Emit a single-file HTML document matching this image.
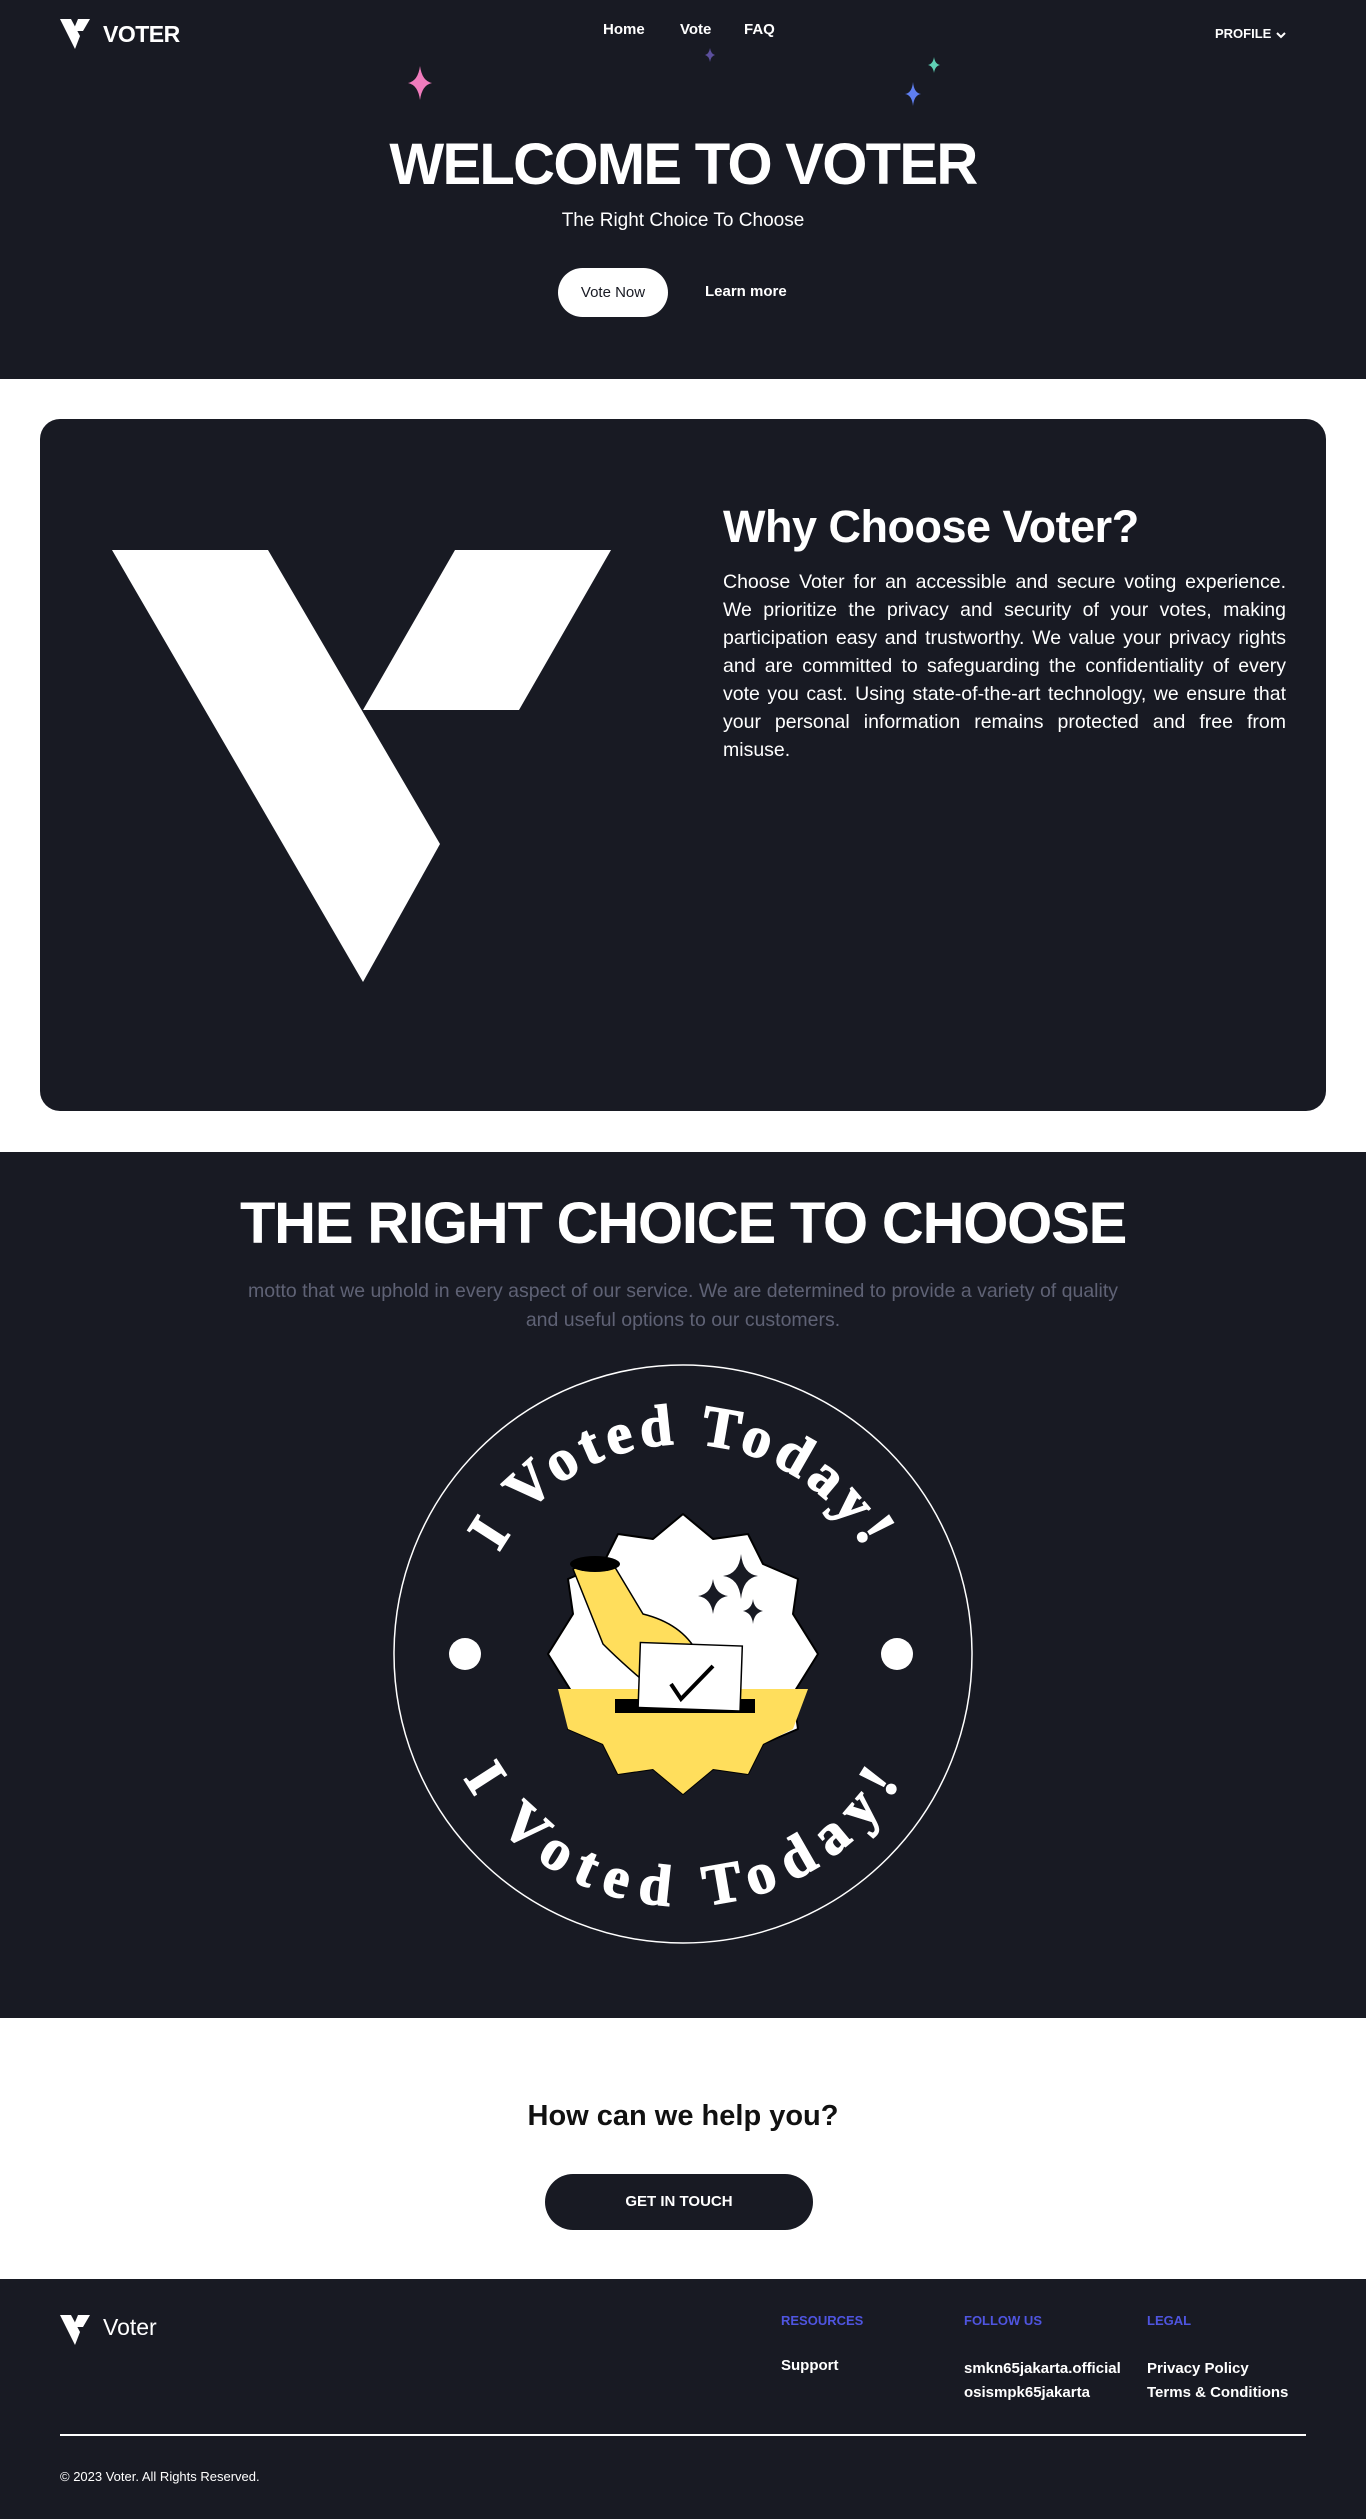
<!DOCTYPE html>
<html><head><meta charset="utf-8">
<style>
*{margin:0;padding:0;box-sizing:border-box}
body{width:1366px;height:2519px;background:#fff;font-family:"Liberation Sans",sans-serif;color:#fff;position:relative;overflow:hidden}
.dark{background:#181a23}
.abs{position:absolute}
#hero{position:absolute;left:0;top:0;width:1366px;height:379px}
.nav a{color:#fff;text-decoration:none;font-weight:bold;font-size:15px;position:absolute;top:21px}
h1{position:absolute;top:130px;left:0;width:1366px;text-align:center;font-size:58px;font-weight:900;letter-spacing:-1.7px;line-height:70px}
#card{position:absolute;left:40px;top:419px;width:1286px;height:692px;border-radius:20px}
#s3{position:absolute;left:0;top:1152px;width:1366px;height:866px}
#foot{position:absolute;left:0;top:2279px;width:1366px;height:240px}
</style></head><body>
<div id="hero" class="dark">
  <svg class="abs" style="left:60px;top:19px" width="30" height="30" viewBox="0 0 30 30"><polygon points="0,0 11,0 20,17 15,30" fill="#fff"/><polygon points="18,0 30,0 23,12 13,12" fill="#fff"/></svg>
  <div class="abs" style="left:103px;top:21px;font-weight:900;font-size:23px;letter-spacing:-0.5px">VOTER</div>
  <div class="nav"><a style="left:603px">Home</a><a style="left:680px">Vote</a><a style="left:744px">FAQ</a></div>
  <div class="abs" style="left:1215px;top:26px;font-size:13px;font-weight:bold">PROFILE
    <svg width="12" height="10" viewBox="0 0 12 10" style="vertical-align:middle"><path d="M2 3 L6 7 L10 3" stroke="#fff" stroke-width="2" fill="none"/></svg></div>
  <svg class="abs" style="left:405px;top:66px" width="30" height="34" viewBox="-15 -17 30 34"><path d="M0-17 Q2-2 12 0 Q2 2 0 17 Q-2 2 -12 0 Q-2-2 0-17Z" fill="#f07cbd"/></svg>
  <svg class="abs" style="left:704px;top:48px" width="12" height="14" viewBox="-6 -7 12 14"><path d="M0-7 Q1-1 5 0 Q1 1 0 7 Q-1 1 -5 0 Q-1-1 0-7Z" fill="#5b4f9c"/></svg>
  <svg class="abs" style="left:927px;top:57px" width="14" height="16" viewBox="-7 -8 14 16"><path d="M0-8 Q1-1 6 0 Q1 1 0 8 Q-1 1 -6 0 Q-1-1 0-8Z" fill="#5fd1b5"/></svg>
  <svg class="abs" style="left:904px;top:82px" width="18" height="24" viewBox="-9 -12 18 24"><path d="M0-12 Q1-1 8 0 Q1 1 0 12 Q-1 1 -8 0 Q-1-1 0-12Z" fill="#5f7ff0"/></svg>
  <h1>WELCOME TO VOTER</h1>
  <div class="abs" style="top:210px;width:1366px;text-align:center;font-size:19px">The Right Choice To Choose</div>
  <div class="abs" style="left:558px;top:268px;width:110px;height:49px;border-radius:25px;background:#fff;color:#181a23;font-size:15px;text-align:center;line-height:49px">Vote Now</div>
  <div class="abs" style="left:705px;top:283px;font-size:15px;font-weight:bold">Learn more</div>
</div>

<div id="card" class="dark">
  <svg class="abs" style="left:0;top:0" width="640" height="692"><polygon points="72,131 228,131 400,425 323,563" fill="#fff"/><polygon points="415,131 571,131 479,291 323,291" fill="#fff"/></svg>
  <div class="abs" style="left:683px;top:82px;font-size:45px;font-weight:bold;letter-spacing:-0.5px">Why Choose Voter?</div>
  <div class="abs" style="left:683px;top:149px;width:563px;font-size:19.5px;line-height:28px;text-align:justify">Choose Voter for an accessible and secure voting experience. We prioritize the privacy and security of your votes, making participation easy and trustworthy. We value your privacy rights and are committed to safeguarding the confidentiality of every vote you cast. Using state-of-the-art technology, we ensure that your personal information remains protected and free from misuse.</div>
</div>

<div id="s3" class="dark">
  <div class="abs" style="top:38px;width:1366px;text-align:center;font-size:58px;font-weight:900;letter-spacing:-1.2px">THE RIGHT CHOICE TO CHOOSE</div>
  <div class="abs" style="left:230px;top:125px;width:906px;text-align:center;font-size:19.5px;line-height:29px;color:#5f6275">motto that we uphold in every aspect of our service. We are determined to provide a variety of quality and useful options to our customers.</div>
  <svg class="abs" style="left:383px;top:202px" width="600" height="600" viewBox="0 0 600 600">
    <defs>
      <path id="top" d="M90,300 A210,210 0 0 1 510,300"/>
      <path id="bot" d="M90,300 A210,210 0 0 0 510,300"/>
    </defs>
    <circle cx="300" cy="300" r="289" fill="none" stroke="#fff" stroke-width="1.5"/>
    <circle cx="82" cy="300" r="16" fill="#fff"/><circle cx="514" cy="300" r="16" fill="#fff"/>
    <text font-family="Liberation Serif,serif" font-weight="bold" font-size="58" fill="#fff" stroke="#fff" stroke-width="1.5" letter-spacing="6"><textPath href="#top" startOffset="50%" text-anchor="middle">I Voted Today!</textPath></text>
    <text font-family="Liberation Serif,serif" font-weight="bold" font-size="58" fill="#fff" stroke="#fff" stroke-width="1.5" letter-spacing="6" dominant-baseline="hanging"><textPath href="#bot" startOffset="50%" text-anchor="middle" side="right">I Voted Today!</textPath></text>
    <g transform="translate(300,300)">
      <polygon points="0,-140 30,-115 65,-120 80,-90 115,-75 110,-40 135,0 110,40 115,75 80,90 65,120 30,115 0,140 -30,115 -65,120 -80,90 -115,75 -110,40 -135,0 -110,-40 -115,-75 -80,-90 -65,-120 -30,-115" fill="#fff" stroke="#000" stroke-width="2" stroke-linejoin="round"/>
      <path d="M-125,35 L125,35 L110,75 L80,90 L65,120 L30,115 L0,140 L-30,115 L-65,120 L-80,90 L-115,75 Z" fill="#ffde5c"/>
      <path d="M-110,-85 Q-90,-95 -70,-90 L-40,-40 Q0,-30 15,0 L20,40 L-5,55 Q-50,20 -80,-10 Z" fill="#ffde5c" stroke="#000" stroke-width="1.5"/>
      <ellipse cx="-88" cy="-90" rx="25" ry="8" fill="#000"/>
      <rect x="-68" y="45" width="140" height="14" fill="#000"/>
      <rect x="-43" y="-10" width="102" height="65" fill="#fff" stroke="#000" stroke-width="1.5" transform="rotate(2)"/>
      <path d="M-12,30 L-2,45 L30,12" stroke="#000" stroke-width="4" fill="none"/>
      <path d="M58,-100 Q60,-80 75,-78 Q60,-76 58,-55 Q56,-76 40,-78 Q56,-80 58,-100Z" fill="#181a23"/>
      <path d="M30,-75 Q32,-60 45,-58 Q32,-56 30,-40 Q28,-56 15,-58 Q28,-60 30,-75Z" fill="#181a23"/>
      <path d="M70,-55 Q71,-45 80,-43 Q71,-41 70,-30 Q69,-41 60,-43 Q69,-45 70,-55Z" fill="#181a23"/>
    </g>
  </svg>
</div>

<div class="abs" style="top:2100px;width:1366px;text-align:center;font-size:29px;font-weight:bold;color:#111">How can we help you?</div>
<div class="abs" style="left:545px;top:2174px;width:268px;height:56px;border-radius:28px;background:#181a23;text-align:center;line-height:56px;font-size:15px;font-weight:bold">GET IN TOUCH</div>

<div id="foot" class="dark">
  <svg class="abs" style="left:60px;top:36px" width="30" height="30" viewBox="0 0 30 30"><polygon points="0,0 11,0 20,17 15,30" fill="#fff"/><polygon points="18,0 30,0 23,12 13,12" fill="#fff"/></svg>
  <div class="abs" style="left:103px;top:35px;font-size:23px">Voter</div>
  <div class="abs" style="left:781px;top:34px;font-size:13px;font-weight:bold;color:#4f55e0">RESOURCES</div>
  <div class="abs" style="left:964px;top:34px;font-size:13px;font-weight:bold;color:#4f55e0">FOLLOW US</div>
  <div class="abs" style="left:1147px;top:34px;font-size:13px;font-weight:bold;color:#4f55e0">LEGAL</div>
  <div class="abs" style="left:781px;top:78px;font-size:15px;font-weight:bold">Support</div>
  <div class="abs" style="left:964px;top:78px;font-size:15px;font-weight:bold;line-height:24px">smkn65jakarta.official<br>osismpk65jakarta</div>
  <div class="abs" style="left:1147px;top:78px;font-size:15px;font-weight:bold;line-height:24px">Privacy Policy<br>Terms &amp; Conditions</div>
  <div class="abs" style="left:60px;top:155px;width:1246px;height:2px;background:#fff"></div>
  <div class="abs" style="left:60px;top:190px;font-size:13px">© 2023 Voter. All Rights Reserved.</div>
</div>
</body></html>
